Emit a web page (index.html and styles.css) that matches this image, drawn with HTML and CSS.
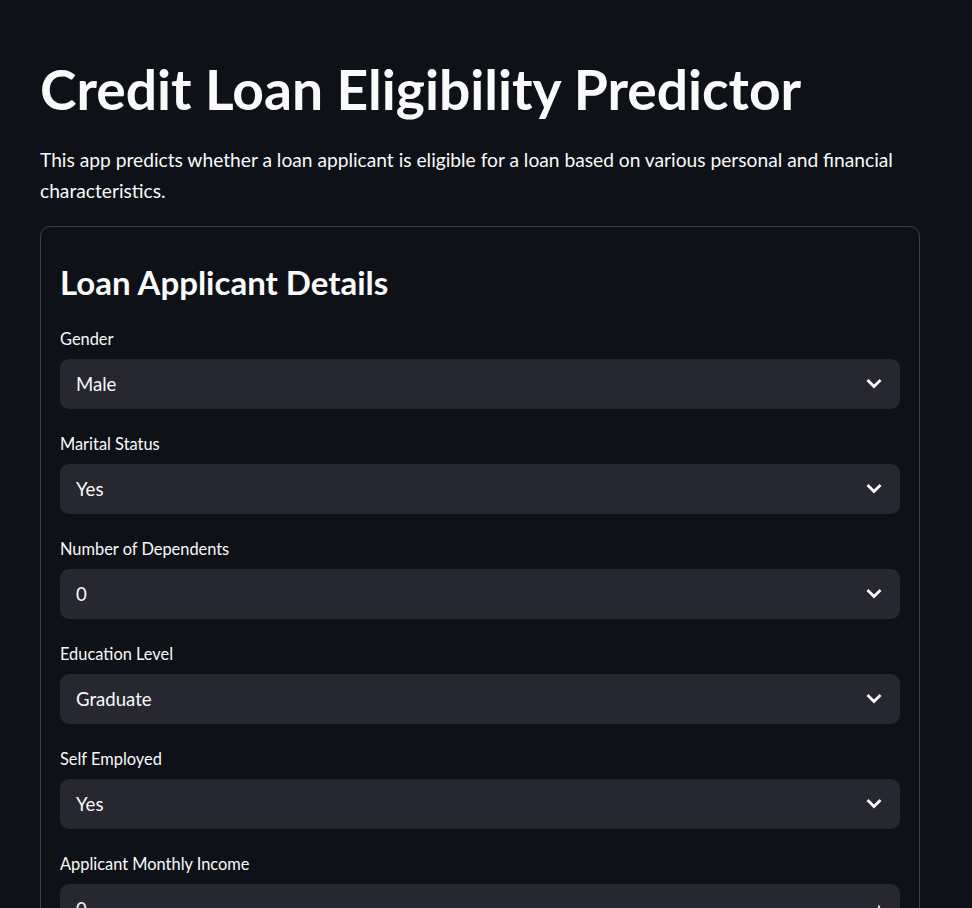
FILE: index.html
```html
<!DOCTYPE html>
<html lang="en">
<head>
<meta charset="utf-8">
<title>Credit Loan Eligibility Predictor</title>
<link rel="stylesheet" href="styles.css">
</head>
<body>
<main class="app">
  <div class="block">
    <h1 class="title">Credit Loan Eligibility Predictor</h1>
    <p class="intro">This app predicts whether a loan applicant is eligible for a loan based on various personal and financial characteristics.</p>
    <form class="form">
      <h2 class="form-title">Loan Applicant Details</h2>
      <div class="field">
        <label class="label">Gender</label>
        <div class="select"><span class="value">Male</span><svg class="chev" viewBox="0 0 16 10" width="16" height="10"><path d="M2.5 2 L8 7.5 L13.5 2" /></svg></div>
      </div>
      <div class="field">
        <label class="label">Marital Status</label>
        <div class="select"><span class="value">Yes</span><svg class="chev" viewBox="0 0 16 10" width="16" height="10"><path d="M2.5 2 L8 7.5 L13.5 2" /></svg></div>
      </div>
      <div class="field">
        <label class="label">Number of Dependents</label>
        <div class="select"><span class="value">0</span><svg class="chev" viewBox="0 0 16 10" width="16" height="10"><path d="M2.5 2 L8 7.5 L13.5 2" /></svg></div>
      </div>
      <div class="field">
        <label class="label">Education Level</label>
        <div class="select"><span class="value">Graduate</span><svg class="chev" viewBox="0 0 16 10" width="16" height="10"><path d="M2.5 2 L8 7.5 L13.5 2" /></svg></div>
      </div>
      <div class="field">
        <label class="label">Self Employed</label>
        <div class="select"><span class="value">Yes</span><svg class="chev" viewBox="0 0 16 10" width="16" height="10"><path d="M2.5 2 L8 7.5 L13.5 2" /></svg></div>
      </div>
      <div class="field">
        <label class="label">Applicant Monthly Income</label>
        <div class="number">
          <span class="value">0</span>
          <span class="steps">
            <span class="step">−</span>
            <span class="step">+</span>
          </span>
        </div>
      </div>
      <div class="field">
        <label class="label">Coapplicant Monthly Income</label>
        <div class="number">
          <span class="value">0</span>
          <span class="steps">
            <span class="step">−</span>
            <span class="step">+</span>
          </span>
        </div>
      </div>
    </form>
  </div>
</main>
</body>
</html>
```

FILE: styles.css
```css
html, body {
  margin: 0;
  padding: 0;
  background: #0e1117;
}

body {
  color: #fafafa;
  font-family: "Lato", "Noto Sans", sans-serif;
}

.app {
  display: flex;
  justify-content: flex-start;
}

.block {
  width: 880px;
  margin-left: 40px;
  padding-top: 58px;
  padding-bottom: 60px;
}

.title {
  margin: 0;
  font-size: 55.2px;
  font-weight: 700;
  line-height: 62px;
}

.intro {
  margin: 25px 0 0;
  font-size: 19.2px;
  line-height: 30.7px;
}

.form {
  margin-top: 20px;
  border: 1px solid rgba(250, 250, 250, 0.2);
  border-radius: 10px;
  padding: 19px 19px 24px;
  display: flex;
  flex-direction: column;
}

.form-title {
  margin: 16px 0 2px;
  font-size: 33px;
  font-weight: 700;
  line-height: 40px;
}

.field {
  display: flex;
  flex-direction: column;
  gap: 8px;
  margin-top: 23px;
}

.label {
  font-size: 16.4px;
  line-height: 24px;
}

.select, .number {
  height: 50px;
  background: #262730;
  border-radius: 9px;
  display: flex;
  align-items: center;
  padding: 0 16px;
  font-size: 18.6px;
}

.value {
  flex: 1;
}

.chev {
  width: 16px;
  height: 10px;
  margin-right: 2px;
}

.chev path {
  fill: none;
  stroke: #fafafa;
  stroke-width: 2.8;
  stroke-linecap: square;
}

.number {
  padding-right: 2px;
}

.steps {
  display: flex;
  height: 100%;
}

.step {
  width: 38px;
  display: flex;
  align-items: center;
  justify-content: center;
  font-size: 22px;
}
```
